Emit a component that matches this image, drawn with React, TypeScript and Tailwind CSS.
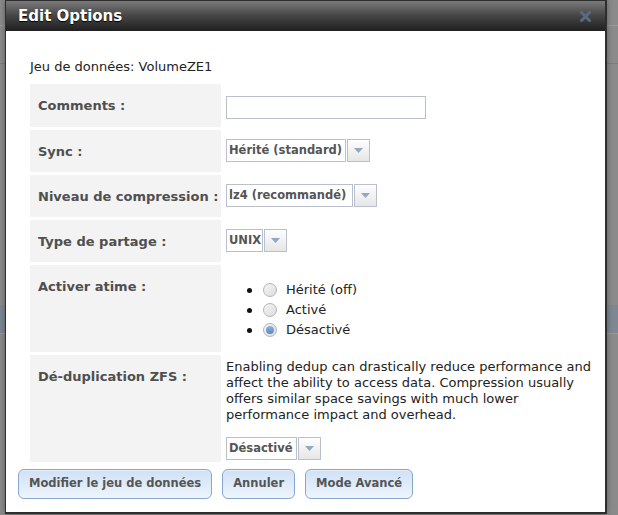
import { useState } from "react";

const font = "font-['DejaVu_Sans',Verdana,sans-serif]";

function SelectBox({ value, textW }: { value: string; textW: string }) {
  return (
    <div className="flex h-[23px]">
      <div
        className={`${textW} h-full border border-[#b9bfcb] bg-white flex items-center pl-[2px] text-[11.5px] font-bold text-[#555] whitespace-nowrap overflow-hidden`}
      >
        {value}
      </div>
      <div className="w-[23px] h-full border border-[#b9bfcb] ml-[1px] bg-gradient-to-b from-[#fefefe] to-[#e6e6e6] flex items-center justify-center">
        <svg width="9" height="5" viewBox="0 0 9 5">
          <path d="M0 0 H9 L4.5 5 Z" fill="#93a6c2" />
        </svg>
      </div>
    </div>
  );
}

function Radio({ label, checked }: { label: string; checked?: boolean }) {
  return (
    <li className="h-[20px] flex items-center">
      <span className="w-[5px] h-[5px] rounded-full bg-[#111] mr-[11px]" />
      <span className="w-[14px] h-[14px] rounded-full border border-[#b4b4b4] bg-gradient-to-br from-[#f6f6f6] to-[#dcdcdc] flex items-center justify-center mr-[9px]">
        {checked && <span className="w-[8px] h-[8px] rounded-full bg-gradient-to-b from-[#8db3e0] to-[#5b88c2]" />}
      </span>
      <span className="text-[13px] text-[#222]">{label}</span>
    </li>
  );
}

function Label({ children }: { children: React.ReactNode }) {
  return (
    <div className="bg-[#f3f3f3] pl-[8px] pt-[12px] text-[13px] font-bold text-[#4f4f4f]">{children}</div>
  );
}

export default function App() {
  const [comment, setComment] = useState("");
  return (
    <div className={`relative w-[618px] h-[515px] bg-[#8b8b8b] overflow-hidden ${font}`}>
      {/* page behind the overlay */}
      <div className="flex flex-col">
        <div className="h-[25px]" />
        <div className="h-[1px] bg-[#9c9c9c]" />
        <div className="h-[37px]" />
        <div className="h-[1px] bg-[#7c7c7c]" />
        <div className="h-[241px]" />
        <div className="h-[28px] bg-[#7e8793]" />
        <div className="h-[1px] bg-[#9a9a9a]" />
      </div>

      {/* dialog */}
      <div className="absolute left-[5px] top-0 w-[602px] h-[514px] bg-white border border-[#2e2e2e] border-r-2 border-b-2 flex flex-col shadow-[0_0_6px_rgba(0,0,0,0.35)]">
        <div className="h-[30px] shrink-0 bg-gradient-to-b from-[#7a7a7a] via-[#454545] to-[#1f1f1f] flex items-center justify-between pl-[12px] pr-[14px]">
          <span className="text-white font-bold text-[15px] [text-shadow:0_1px_1px_#000]">Edit Options</span>
          <svg width="11" height="11" viewBox="0 0 11 11">
            <path d="M1.5 1.5 L9.5 9.5 M9.5 1.5 L1.5 9.5" stroke="#5a6a80" strokeWidth="3" strokeLinecap="round" />
          </svg>
        </div>

        <div className="flex-1 overflow-hidden pl-[24px] pr-[8px]">
          <div className="pt-[28px] text-[13px] text-[#222] leading-[16px]">Jeu de données: VolumeZE1</div>

          <div className="mt-[9px] grid grid-cols-[191px_1fr] gap-x-[4px] gap-y-[3px] grid-rows-[43px_42px_42px_42px_87px_107px] h-[378px] overflow-hidden">
            <Label>Comments :</Label>
            <div className="pt-[10px] pl-[1px]">
              <input
                value={comment}
                onChange={(e) => setComment(e.target.value)}
                className="w-[200px] h-[23px] border border-[#b9bfcb] outline-none px-[3px] text-[12px]"
              />
            </div>

            <Label>Sync :</Label>
            <div className="pt-[9px] pl-[1px]">
              <SelectBox value="Hérité (standard)" textW="w-[120px]" />
            </div>

            <Label>Niveau de compression :</Label>
            <div className="pt-[9px] pl-[1px]">
              <SelectBox value="lz4 (recommandé)" textW="w-[127px]" />
            </div>

            <Label>Type de partage :</Label>
            <div className="pt-[9px] pl-[1px]">
              <SelectBox value="UNIX" textW="w-[37px]" />
            </div>

            <Label>Activer atime :</Label>
            <div className="pt-[15px]">
              <ul className="pl-[22px]">
                <Radio label="Hérité (off)" />
                <Radio label="Activé" />
                <Radio label="Désactivé" checked />
              </ul>
            </div>

            <Label>Dé-duplication ZFS :</Label>
            <div className="pt-[4px] pl-[1px]">
              <p className="text-[13px] leading-[16px] text-[#222] pr-[4px]">
                Enabling dedup can drastically reduce performance and affect the ability to access data. Compression
                usually offers similar space savings with much lower performance impact and overhead.
              </p>
              <div className="mt-[14px]">
                <SelectBox value="Désactivé" textW="w-[71px]" />
              </div>
            </div>
          </div>

          <div className="flex gap-[10px] -ml-[12px] mt-[7px]">
            {["Modifier le jeu de données", "Annuler", "Mode Avancé"].map((t) => (
              <button
                key={t}
                className="h-[30px] px-[10px] rounded-[6px] border border-[#86a7cf] bg-gradient-to-b from-[#cfe1f6] to-[#eef5fd] text-[11.5px] font-bold text-[#555] shadow-[inset_0_1px_0_#e8f1fc]"
              >
                {t}
              </button>
            ))}
          </div>
        </div>
      </div>
    </div>
  );
}
